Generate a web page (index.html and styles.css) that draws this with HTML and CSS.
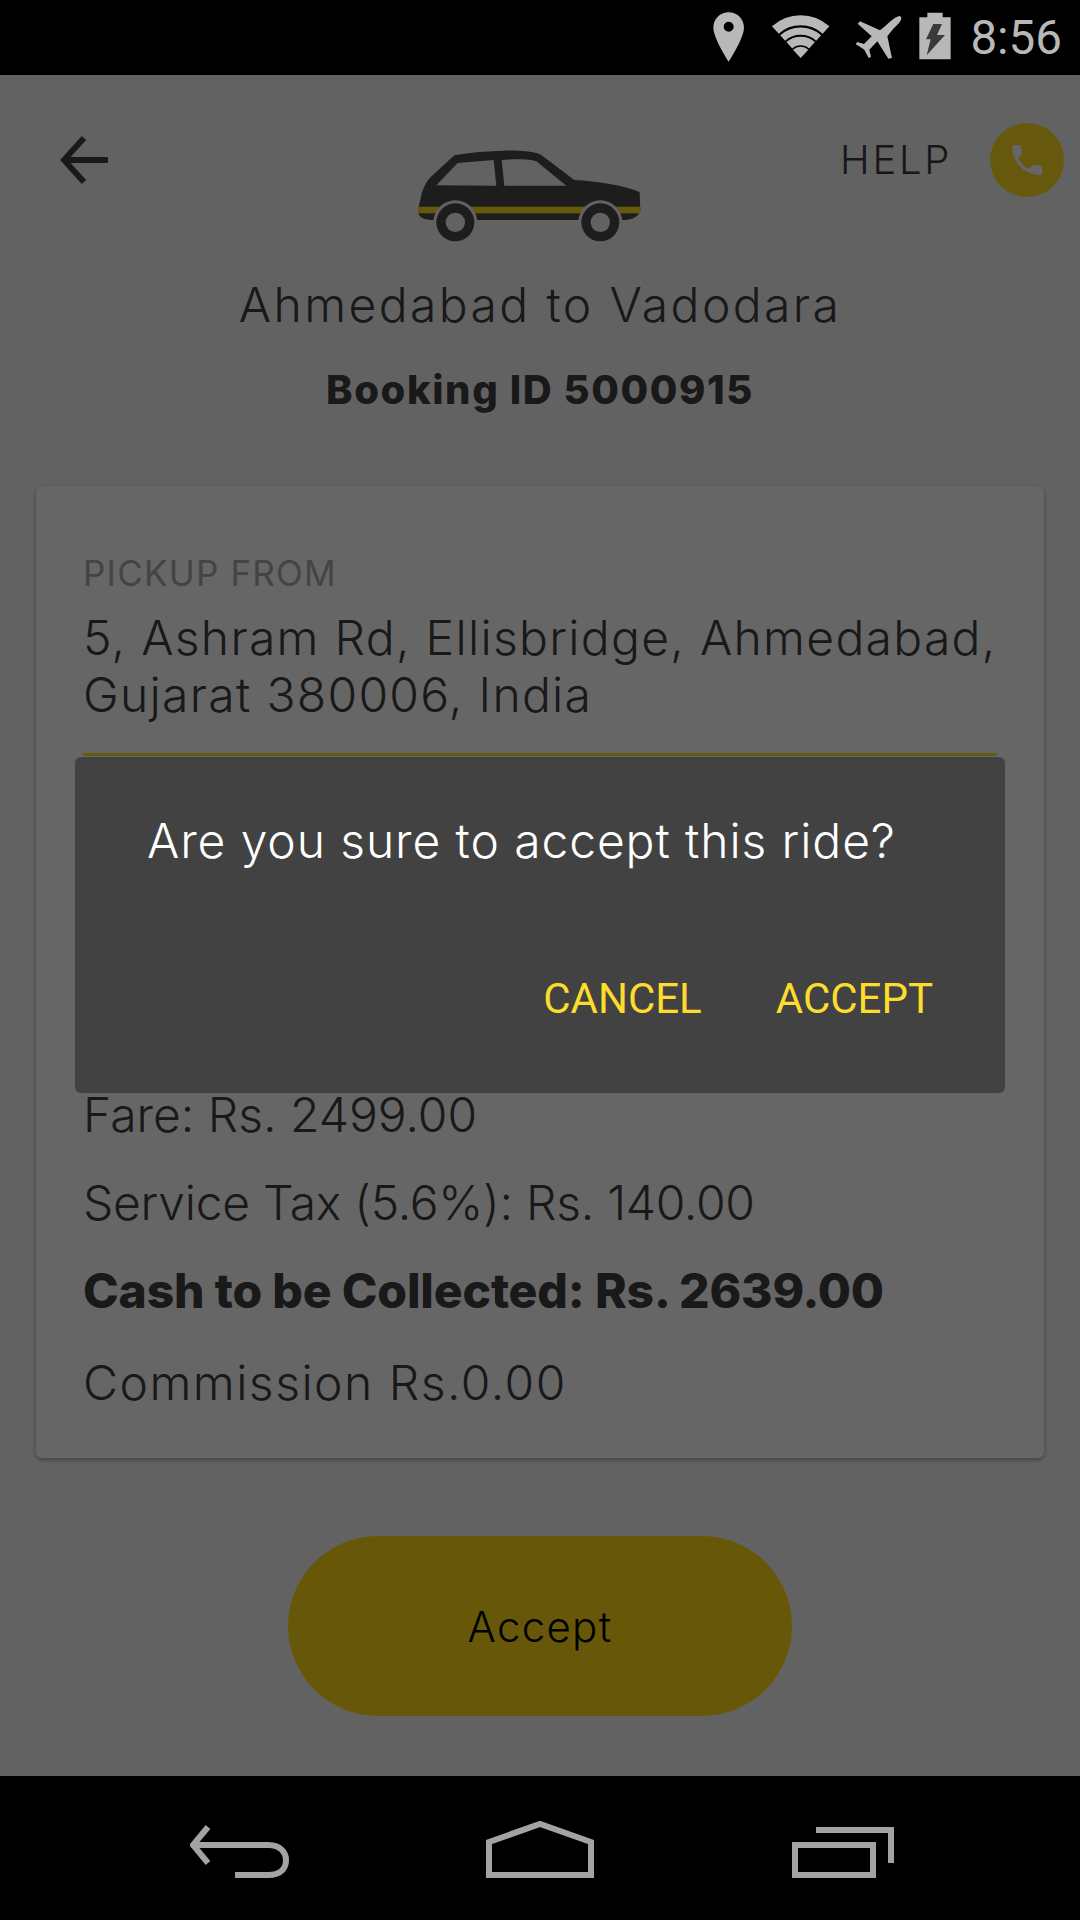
FILE: index.html
```html
<!DOCTYPE html>
<html lang="en">
<head>
<meta charset="utf-8">
<title>Booking</title>
<link rel="stylesheet" href="styles.css">
</head>
<body>
<div class="app">
  <div class="statusbar">
    <svg class="st st-pin" viewBox="96 30 100 160"><path fill-rule="evenodd" d="M146 37C120 37 100 57 100 83C100 115 146 185 146 185C146 185 192 115 192 83C192 57 172 37 146 37ZM146 65A15 15 0 1 1 146 95A15 15 0 1 1 146 65Z"/></svg>
    <svg class="st st-wifi" viewBox="270 30 184 160"><g fill="none" stroke-width="30"><path d="M286 90A113 113 0 0 1 438 90"/></g><g fill="none" stroke-width="22"><path d="M308 114A81 81 0 0 1 416 114"/></g><g fill="none" stroke-width="26"><path d="M328 136A51 51 0 0 1 396 136"/></g><path stroke="none" d="M362 174L339 149A34 34 0 0 1 385 149Z"/></svg>
    <svg class="st st-plane" viewBox="522 30 150 160"><path transform="translate(240 24)" d="M420 24C410 24 395 35 375 55L360 67L300 40L293 47L335 85L312 108L292 102L287 108L313 125L326 150L333 146L328 125L352 100L385 152L396 150L382 85L400 62C420 45 430 30 420 24Z"/></svg>
    <svg class="st st-batt" viewBox="714 30 102 160"><path d="M742 38H788V52H812V178H718V52H742Z"/><path class="bolt" d="M760 72H786L771 105H795L740 166L752 118H738Z"/></svg>
    <span class="clock">8:56</span>
  </div>

  <main class="screen">
    <header class="head">
      <div class="head-left">
        <svg class="back" viewBox="0 0 50 50"><path d="M24 3L4 25L24 47M4 25H48"/></svg>
      </div>
      <svg class="car" viewBox="110 55 675 285">
        <path class="car-body" d="M115 228L125 185C132 165 140 150 152 138L222 74C262 66 310 62 370 60C420 59 460 62 482 72L582 148C650 152 730 164 778 184L780 240C775 258 755 268 725 268H160C130 268 118 260 115 250Z"/>
        <path class="car-glass" d="M168 164L232 97L340 88L348 165ZM364 88C400 85 445 84 468 92L558 165H372Z"/>
        <rect class="car-stripe" x="115" y="228" width="664" height="20"/>
        <circle class="car-ring" cx="225" cy="275" r="66"/>
        <circle class="car-ring" cx="660" cy="275" r="66"/>
        <circle class="car-tyre" cx="225" cy="275" r="57"/>
        <circle class="car-tyre" cx="660" cy="275" r="57"/>
        <circle class="car-hub" cx="225" cy="275" r="29"/>
        <circle class="car-hub" cx="660" cy="275" r="29"/>
      </svg>
      <div class="head-right">
        <span class="help">HELP</span>
        <span class="call"><svg viewBox="0 0 24 24"><path d="M6.62 10.79c1.44 2.83 3.76 5.14 6.59 6.59l2.2-2.2c.27-.27.67-.36 1.02-.24 1.12.37 2.33.57 3.57.57.55 0 1 .45 1 1V20c0 .55-.45 1-1 1-9.39 0-17-7.61-17-17 0-.55.45-1 1-1h3.5c.55 0 1 .45 1 1 0 1.25.2 2.45.57 3.57.11.35.03.74-.25 1.02l-2.2 2.2z"/></svg></span>
      </div>
    </header>

    <h1 class="route">Ahmedabad to Vadodara</h1>
    <p class="booking">Booking ID 5000915</p>

    <section class="card">
      <div class="label">PICKUP FROM</div>
      <div class="address">5, Ashram Rd, Ellisbridge, Ahmedabad,<br>Gujarat 380006, India</div>
      <div class="rule"></div>
      <div class="row row-fare">Fare: Rs. 2499.00</div>
      <div class="row row-tax">Service Tax (5.6%): Rs. 140.00</div>
      <div class="row row-cash">Cash to be Collected: Rs. 2639.00</div>
      <div class="row row-comm">Commission Rs.0.00</div>
    </section>

    <button class="accept">Accept</button>

    <div class="scrim"></div>
    <div class="dialog">
      <div class="dialog-msg">Are you sure to accept this ride?</div>
      <div class="dialog-actions">
        <span class="dialog-btn">CANCEL</span>
        <span class="dialog-btn">ACCEPT</span>
      </div>
    </div>
  </main>

  <nav class="navbar">
    <svg class="nav-back" viewBox="0 0 102 60"><path d="M18 7L3 25L18 43M3 25H78C92 25 96 34 96 40C96 47 92 55 78 55H45"/></svg>
    <svg class="nav-home" viewBox="0 0 108 60"><path d="M3 22L54 4L105 22V55H3Z"/></svg>
    <svg class="nav-recent" viewBox="0 0 102 60"><path d="M3 25H81V55H3ZM24 10H99V43"/></svg>
  </nav>
</div>
</body>
</html>
```

FILE: styles.css
```css
* { box-sizing: border-box; }
html, body { margin: 0; padding: 0; }
body { width: 1080px; height: 1920px; overflow: hidden; font-family: Inter, "Liberation Sans", sans-serif; }

.app { width: 1080px; height: 1920px; display: flex; flex-direction: column; background: #000; }

/* status bar */
.statusbar { height: 75px; flex: none; background: #000; display: flex; align-items: center; justify-content: flex-end; padding: 0 18px 2px 0; }
.st { height: 53.33px; flex: none; fill: #b8b8b8; stroke: #b8b8b8; stroke-width: 0; }
.st-wifi g { stroke: #b8b8b8; }
.st-pin { width: 33.33px; margin-right: 24.67px; }
.st-wifi { width: 61.33px; margin-right: 22.67px; }
.st-plane { width: 50px; margin-right: 14px; }
.st-batt { width: 34px; margin-right: 18px; }
.st-batt .bolt { fill: #3a3a3a; }
.clock { font-family: Roboto, sans-serif; font-size: 47.5px; line-height: 54px; color: #b8b8b8; padding-top: 3px; }

/* main screen */
.screen { position: relative; flex: 1; background: #f6f6f6; display: flex; flex-direction: column; align-items: stretch; }
.head { height: 200px; flex: none; display: grid; grid-template-columns: 1fr auto 1fr; align-items: start; padding: 48px 16px 0 0; }
.head-left { padding: 12px 0 0 60px; }
.back { display: block; width: 50px; height: 50px; fill: none; stroke: #404040; stroke-width: 6; }
.car { display: block; width: 225px; height: 95px; margin: 26px 3px 0 -3px; }
.car-body { fill: #4a4a4a; }
.car-glass { fill: #f4f4f4; }
.car-stripe { fill: #ffdd22; }
.car-ring { fill: #f6f6f6; }
.car-tyre { fill: #4a4a4a; }
.car-hub { fill: #f6f6f6; }
.head-right { display: flex; justify-content: flex-end; align-items: center; gap: 38px; height: 74px; }
.help { font-size: 40px; line-height: 50px; color: #3a3a3a; font-weight: 340; letter-spacing: 2.7px; }
.call { width: 74px; height: 74px; border-radius: 50%; background: #ffdd22; display: flex; align-items: center; justify-content: center; }
.call svg { width: 40px; height: 40px; fill: #fff; }

.route { margin: 0; font-size: 48px; line-height: 60px; font-weight: 340; color: #404040; text-align: center; letter-spacing: 2.4px; }
.booking { margin: 30px 0 0; font-size: 40px; line-height: 50px; font-weight: 800; color: #404040; text-align: center; letter-spacing: 1.6px; }

.card { margin: 71px 36px 0; padding: 65px 47px 45px; background: #fff; border-radius: 6px; box-shadow: 0 2px 5px rgba(0,0,0,.35); }
.label { font-size: 35px; line-height: 44px; color: #aaa; letter-spacing: 1.2px; }
.address { margin-top: 14px; font-size: 48px; line-height: 57px; font-weight: 340; color: #404040; letter-spacing: 1.3px; white-space: nowrap; }
.rule { margin-top: 30px; height: 3px; background: #ffdd22; }
.row { font-size: 48px; line-height: 60px; font-weight: 340; color: #404040; white-space: nowrap; }
.row-fare { margin-top: 329px; letter-spacing: 0; }
.row-tax { margin-top: 28px; letter-spacing: -.27px; }
.row-cash { margin-top: 28px; font-weight: 800; letter-spacing: -.15px; }
.row-comm { margin-top: 32px; letter-spacing: 1.5px; }

.accept { display: block; width: 504px; height: 180px; margin: 78px auto 0; border: 0; border-radius: 90px; background: #ffdc14; color: #000; font-family: Inter, sans-serif; font-size: 42px; font-weight: 340; letter-spacing: 1.3px; }

.scrim { position: absolute; inset: 0; background: rgba(0,0,0,.6); }
.dialog { position: absolute; left: 75px; top: 682px; width: 930px; height: 336px; padding: 54px 72px 0; background: #424242; border-radius: 6px; }
.dialog-msg { font-size: 48px; line-height: 60px; font-weight: 340; color: #fff; letter-spacing: .9px; white-space: nowrap; }
.dialog-actions { margin-top: 103px; display: flex; justify-content: flex-end; gap: 74px; }
.dialog-btn { font-family: Roboto, sans-serif; font-size: 42px; line-height: 50px; color: #fddc2c; }

/* nav bar */
.navbar { height: 144px; flex: none; background: #000; display: flex; justify-content: center; align-items: flex-start; padding: 44px 0 0 3px; }
.navbar svg { display: block; height: 60px; fill: none; stroke: #a3a3a3; stroke-width: 6; }
.nav-back { width: 102px; margin-left: 1px; stroke-width: 5; }
.nav-home { width: 108px; margin: 0 198px 0 194px; }
.nav-recent { width: 102px; }
```
